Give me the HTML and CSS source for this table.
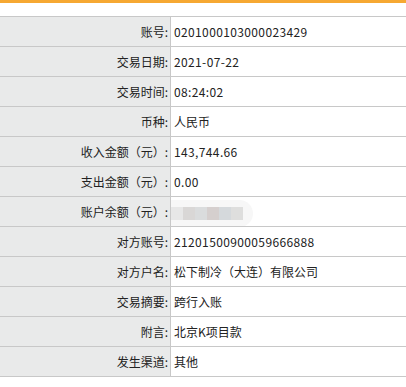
FILE: index.html
```html
<!DOCTYPE html>
<html lang="zh-CN">
<head>
<meta charset="utf-8">
<link rel="stylesheet" href="styles.css">
</head>
<body>
<div class="topbar"></div>
<div class="strip"></div>
<div class="table">
  <div class="row"><div class="label">账号:</div><div class="value num">0201000103000023429</div></div>
  <div class="row"><div class="label">交易日期:</div><div class="value num">2021-07-22</div></div>
  <div class="row"><div class="label">交易时间:</div><div class="value num">08:24:02</div></div>
  <div class="row"><div class="label">币种:</div><div class="value">人民币</div></div>
  <div class="row"><div class="label">收入金额（元）:</div><div class="value num">143,744.66</div></div>
  <div class="row"><div class="label">支出金额（元）:</div><div class="value num">0.00</div></div>
  <div class="row"><div class="label">账户余额（元）:</div><div class="value"><span class="blur"><i class="b1"></i><i class="b2"></i><i class="b3"></i><i class="b4"></i><i class="b5"></i><i class="b6"></i></span></div></div>
  <div class="row"><div class="label">对方账号:</div><div class="value num">21201500900059666888</div></div>
  <div class="row"><div class="label">对方户名:</div><div class="value">松下制冷（大连）有限公司</div></div>
  <div class="row"><div class="label">交易摘要:</div><div class="value">跨行入账</div></div>
  <div class="row"><div class="label">附言:</div><div class="value">北京K项目款</div></div>
  <div class="row last"><div class="label">发生渠道:</div><div class="value">其他</div></div>
</div>
</body>
</html>
```
FILE: styles.css
```css
html, body {
  margin: 0;
  padding: 0;
  background: #ffffff;
}
body {
  font-family: "Noto Sans CJK SC", "Noto Sans", sans-serif;
  font-size: 12px;
  color: #222222;
}
.topbar {
  height: 3px;
  background: #f6a832;
}
.strip {
  height: 13px;
  background: #ffffff;
}
.table {
  display: flex;
  flex-direction: column;
}
.row {
  display: grid;
  grid-template-columns: 171px 1fr;
  height: 29px;
  border-top: 1px solid #c8c8c8;
}
.row.last {
  border-bottom: 1px solid #c8c8c8;
}
.label {
  background: #e9eaea;
  border-right: 1px solid #c8c8c8;
  text-align: right;
  padding-right: 2px;
  line-height: 29px;
  white-space: nowrap;
}
.value {
  padding-left: 3px;
  line-height: 29px;
  white-space: nowrap;
}
.value.num {
  letter-spacing: 0.37px;
}
.blur {
  display: inline-flex;
  vertical-align: middle;
  margin-left: -3px;
  padding: 7px 10px 7px 0;
  background: #f7f7f7;
  border-radius: 0 14px 14px 0;
}
.blur i {
  display: block;
  width: 12px;
  height: 13px;
}
.b1 { background: #e7e7e7; }
.b2 { background: #d9d7d6; }
.b3 { background: #dadcdd; }
.b4 { background: #d5cfce; }
.b5 { background: #d5d9dc; }
.b6 { background: #dededd; }
```
